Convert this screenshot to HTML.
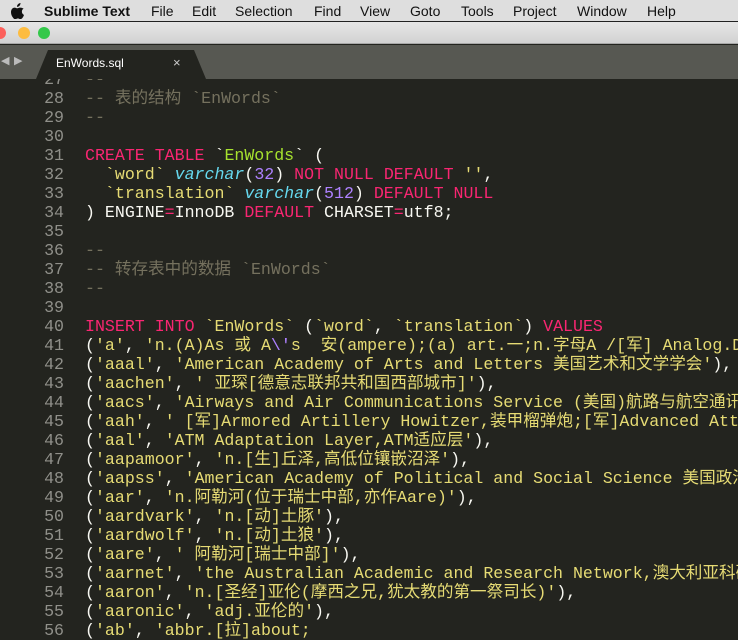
<!DOCTYPE html>
<html><head><meta charset="utf-8"><style>
*{margin:0;padding:0;box-sizing:border-box}
body{width:738px;height:624px;overflow:hidden;background:#23241f;font-family:"Liberation Sans",sans-serif;position:relative}
#menu{position:absolute;z-index:3;left:0;top:0;width:738px;height:22px;background:#dedede;border-bottom:1px solid #222;font-size:14px;color:#111}
#menu span{position:absolute;top:3px}
#title{position:absolute;z-index:3;left:0;top:22px;width:738px;height:22px;background:linear-gradient(#e6e6e6,#d2d2d2);border-bottom:1px solid #a8a8a8}
.dot{position:absolute;top:5px;width:12px;height:12px;border-radius:50%}
#tabs{position:absolute;z-index:3;left:0;top:45px;width:738px;height:34px;background:#575852}
#tab{position:absolute;left:36px;top:5px;width:170px;height:29px;background:#23241f;clip-path:polygon(12px 0,158px 0,170px 29px,0 29px)}
#code{position:absolute;z-index:1;left:0;top:70px;width:738px;font-family:"Liberation Mono","Noto Sans CJK SC",monospace;font-size:16.6px;line-height:19px;color:#f8f8f2}
.l{height:19px;position:relative;white-space:nowrap}
.n{position:absolute;right:674px;color:#90908a;text-align:right}
.t{position:absolute;left:85px;white-space:pre}
.c{color:#75715e}.k{color:#f92672}.s{color:#e6db74}.ty{color:#66d9ef;font-style:italic}.nu{color:#ae81ff}.g{color:#a6e22e}
</style></head><body>
<div id="menu">
<svg style="position:absolute;left:11px;top:3px" width="14" height="16" viewBox="0 0 14 16"><path d="M9.5 0c.1 1-.3 2-1 2.7-.6.7-1.6 1.2-2.5 1.1-.1-1 .4-2 1-2.6C7.7.5 8.7 0 9.5 0zM12.7 5.5c-.1.1-1.8 1-1.8 3.1 0 2.4 2.1 3.2 2.1 3.3 0 .1-.3 1.2-1.1 2.3-.7 1-1.4 1.9-2.5 1.9-1.1 0-1.4-.6-2.6-.6-1.2 0-1.6.7-2.6.7-1.1 0-1.8-1-2.5-2C.6 12.9 0 11 0 9.1 0 6.2 1.9 4.6 3.7 4.6c1 0 1.8.7 2.5.7.6 0 1.6-.7 2.7-.7.5 0 2.2.1 3.8 1z" fill="#111"/></svg>
<span style="left:44px;font-weight:bold">Sublime Text</span>
<span style="left:151px">File</span><span style="left:192px">Edit</span><span style="left:235px">Selection</span><span style="left:314px">Find</span><span style="left:360px">View</span><span style="left:410px">Goto</span><span style="left:461px">Tools</span><span style="left:513px">Project</span><span style="left:577px">Window</span><span style="left:647px">Help</span>
</div>
<div id="title"><div class="dot" style="left:-6px;background:#fc605b"></div><div class="dot" style="left:18px;background:#fdbc40"></div><div class="dot" style="left:38px;background:#34c84a"></div></div>
<div id="tabs">
<span style="position:absolute;left:1px;top:9px;color:#bbb;font-size:11px">◀</span><span style="position:absolute;left:14px;top:9px;color:#bbb;font-size:11px">▶</span>
<div id="tab"></div>
<span style="position:absolute;left:56px;top:11px;color:#fff;font-size:12px">EnWords.sql</span>
<span style="position:absolute;left:173px;top:10px;color:#ccc;font-size:13px">×</span>
</div>
<div id="code">
<div class="l"><span class="n">27</span><span class="t c">--</span></div>
<div class="l"><span class="n">28</span><span class="t c">-- 表的结构 `EnWords`</span></div>
<div class="l"><span class="n">29</span><span class="t c">--</span></div>
<div class="l"><span class="n">30</span></div>
<div class="l"><span class="n">31</span><span class="t"><span class="k">CREATE</span> <span class="k">TABLE</span> `<span class="g">EnWords</span>` (</span></div>
<div class="l"><span class="n">32</span><span class="t">  <span class="s">`word`</span> <span class="ty">varchar</span>(<span class="nu">32</span>) <span class="k">NOT</span> <span class="k">NULL</span> <span class="k">DEFAULT</span> <span class="s">''</span>,</span></div>
<div class="l"><span class="n">33</span><span class="t">  <span class="s">`translation`</span> <span class="ty">varchar</span>(<span class="nu">512</span>) <span class="k">DEFAULT</span> <span class="k">NULL</span></span></div>
<div class="l"><span class="n">34</span><span class="t">) ENGINE<span class="k">=</span>InnoDB <span class="k">DEFAULT</span> CHARSET<span class="k">=</span>utf8;</span></div>
<div class="l"><span class="n">35</span></div>
<div class="l"><span class="n">36</span><span class="t c">--</span></div>
<div class="l"><span class="n">37</span><span class="t c">-- 转存表中的数据 `EnWords`</span></div>
<div class="l"><span class="n">38</span><span class="t c">--</span></div>
<div class="l"><span class="n">39</span></div>
<div class="l"><span class="n">40</span><span class="t"><span class="k">INSERT</span> <span class="k">INTO</span> <span class="s">`EnWords`</span> (<span class="s">`word`</span>, <span class="s">`translation`</span>) <span class="k">VALUES</span></span></div>
<div class="l"><span class="n">41</span><span class="t">(<span class="s">'a'</span>, <span class="s">'n.(A)As 或 A<span class="nu">\'</span>s  安(ampere);(a) art.一;n.字母A /[军] Analog.D</span></span></div>
<div class="l"><span class="n">42</span><span class="t">(<span class="s">'aaal'</span>, <span class="s">'American Academy of Arts and Letters 美国艺术和文学学会'</span>),</span></div>
<div class="l"><span class="n">43</span><span class="t">(<span class="s">'aachen'</span>, <span class="s">' 亚琛[德意志联邦共和国西部城市]'</span>),</span></div>
<div class="l"><span class="n">44</span><span class="t">(<span class="s">'aacs'</span>, <span class="s">'Airways and Air Communications Service (美国)航路与航空通讯</span></span></div>
<div class="l"><span class="n">45</span><span class="t">(<span class="s">'aah'</span>, <span class="s">' [军]Armored Artillery Howitzer,装甲榴弹炮;[军]Advanced Att</span></span></div>
<div class="l"><span class="n">46</span><span class="t">(<span class="s">'aal'</span>, <span class="s">'ATM Adaptation Layer,ATM适应层'</span>),</span></div>
<div class="l"><span class="n">47</span><span class="t">(<span class="s">'aapamoor'</span>, <span class="s">'n.[生]丘泽,高低位镶嵌沼泽'</span>),</span></div>
<div class="l"><span class="n">48</span><span class="t">(<span class="s">'aapss'</span>, <span class="s">'American Academy of Political and Social Science 美国政治</span></span></div>
<div class="l"><span class="n">49</span><span class="t">(<span class="s">'aar'</span>, <span class="s">'n.阿勒河(位于瑞士中部,亦作Aare)'</span>),</span></div>
<div class="l"><span class="n">50</span><span class="t">(<span class="s">'aardvark'</span>, <span class="s">'n.[动]土豚'</span>),</span></div>
<div class="l"><span class="n">51</span><span class="t">(<span class="s">'aardwolf'</span>, <span class="s">'n.[动]土狼'</span>),</span></div>
<div class="l"><span class="n">52</span><span class="t">(<span class="s">'aare'</span>, <span class="s">' 阿勒河[瑞士中部]'</span>),</span></div>
<div class="l"><span class="n">53</span><span class="t">(<span class="s">'aarnet'</span>, <span class="s">'the Australian Academic and Research Network,澳大利亚科研</span></span></div>
<div class="l"><span class="n">54</span><span class="t">(<span class="s">'aaron'</span>, <span class="s">'n.[圣经]亚伦(摩西之兄,犹太教的第一祭司长)'</span>),</span></div>
<div class="l"><span class="n">55</span><span class="t">(<span class="s">'aaronic'</span>, <span class="s">'adj.亚伦的'</span>),</span></div>
<div class="l"><span class="n">56</span><span class="t">(<span class="s">'ab'</span>, <span class="s">'abbr.[拉]about;</span></span></div>
</div>
</body></html>
